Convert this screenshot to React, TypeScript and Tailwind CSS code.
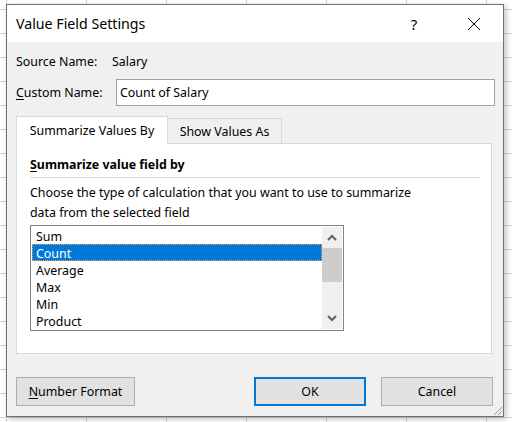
import React from "react";

function Chevron({ up }: { up?: boolean }) {
  return (
    <svg width="10" height="7" viewBox="0 0 10 7" className="block">
      <path
        d={up ? "M1 6 L5 2 L9 6" : "M1 1 L5 5 L9 1"}
        fill="none"
        stroke="#606060"
        strokeWidth="2"
      />
    </svg>
  );
}

export default function App() {
  const items = ["Sum", "Count", "Average", "Max", "Min", "Product"];
  return (
    <div
      className="relative w-[512px] h-[422px] overflow-hidden bg-white [background-image:linear-gradient(to_right,#d4d4d4_1px,transparent_1px),linear-gradient(to_bottom,#d4d4d4_1px,transparent_1px)] [background-size:80px_24px] [background-position:6px_9px] text-black text-[12.4px] leading-[20px]"
      style={{ fontFamily: '"Noto Sans", "Open Sans", sans-serif' }}
    >
      <div className="absolute left-[6px] top-[4px] w-[498px] h-[413px] border border-[#707070] bg-[#f0f0f0] shadow-[2px_2px_6px_rgba(0,0,0,0.25)] flex flex-col">
        {/* title bar */}
        <div className="h-[37px] bg-white flex items-center pl-[9px] shrink-0">
          <div className="text-[14.2px] leading-[20px] flex-1">Value Field Settings</div>
          <div className="text-[15px] leading-[20px] w-[20px] text-center mr-[43px]">?</div>
          <svg width="14" height="14" viewBox="0 0 14 14" className="mr-[22px]">
            <path d="M1 1 L13 13 M13 1 L1 13" stroke="#000" strokeWidth="1" />
          </svg>
        </div>
        {/* body */}
        <div className="flex-1 flex flex-col pt-[10px]">
          <div className="flex pl-[9px] h-[20px]">
            <span className="w-[96px]">Source Name:</span>
            <span>Salary</span>
          </div>
          <div className="flex items-center pl-[9px] mt-[7px] h-[27px]">
            <span className="w-[100px]">
              <u className="underline-offset-2">C</u>ustom Name:
            </span>
            <div className="w-[379px] h-[27px] bg-white border border-[#a0a0a0] flex items-center pl-[3px]">
              Count of Salary
            </div>
          </div>
          {/* tabs */}
          <div className="flex items-end ml-[9px] mt-[10px] h-[27px]">
            <div className="relative z-10 w-[152px] h-[28px] -mb-px bg-white border border-b-0 border-[#d9d9d9] flex items-center justify-center pt-[1px]">
              Summarize Values By
            </div>
            <div className="w-[114px] h-[25px] bg-[#f0f0f0] border border-l-0 border-b-0 border-[#d9d9d9] flex items-center justify-center pt-[1px]">
              Show Values As
            </div>
          </div>
          {/* panel */}
          <div className="ml-[9px] w-[476px] h-[211px] bg-white border border-[#d9d9d9] pt-[11px] pl-[13px]">
            <div className="font-bold">
              <u className="underline-offset-2">S</u>ummarize value field by
            </div>
            <div className="mt-[2px] w-[450px] h-px bg-[#dadada]" />
            <div className="mt-[5px]">
              Choose the type of calculation that you want to use to summarize
            </div>
            <div>data from the selected field</div>
            <div className="mt-[2px] w-[314px] h-[106px] border border-[#828282] p-px flex">
              <div className="flex-1 flex flex-col">
                {items.map((it) =>
                  it === "Count" ? (
                    <div
                      key={it}
                      className="h-[17px] leading-[17px] bg-[#0078d7] text-white border border-dotted border-[#f0a050] pl-[3px]"
                    >
                      {it}
                    </div>
                  ) : (
                    <div key={it} className="h-[17px] leading-[19px] pl-[4px]">
                      {it}
                    </div>
                  )
                )}
              </div>
              <div className="w-[20px] bg-[#f0f0f0] flex flex-col items-center">
                <div className="h-[21px] flex items-center justify-center">
                  <Chevron up />
                </div>
                <div className="w-[20px] h-[34px] bg-[#cdcdcd]" />
                <div className="flex-1" />
                <div className="h-[21px] flex items-center justify-center">
                  <Chevron />
                </div>
              </div>
            </div>
          </div>
          {/* buttons */}
          <div className="flex mt-[23px] pl-[9px] pr-[10px] h-[29px]">
            <div className="w-[119px] h-[29px] bg-[#e1e1e1] border border-[#adadad] flex items-center justify-center">
              <span>
                <u className="underline-offset-2">N</u>umber Format
              </span>
            </div>
            <div className="flex-1" />
            <div className="w-[112px] h-[29px] bg-[#e1e1e1] border-2 border-[#0078d7] flex items-center justify-center">
              OK
            </div>
            <div className="w-[112px] h-[29px] ml-[15px] bg-[#e1e1e1] border border-[#adadad] flex items-center justify-center">
              Cancel
            </div>
          </div>
        </div>
        {/* resize grip */}
        <svg width="12" height="12" viewBox="0 0 12 12" className="absolute right-0 bottom-0">
          <path d="M11 3 L3 11 M11 7 L7 11" stroke="#9a9a9a" strokeWidth="1" />
        </svg>
      </div>
    </div>
  );
}
